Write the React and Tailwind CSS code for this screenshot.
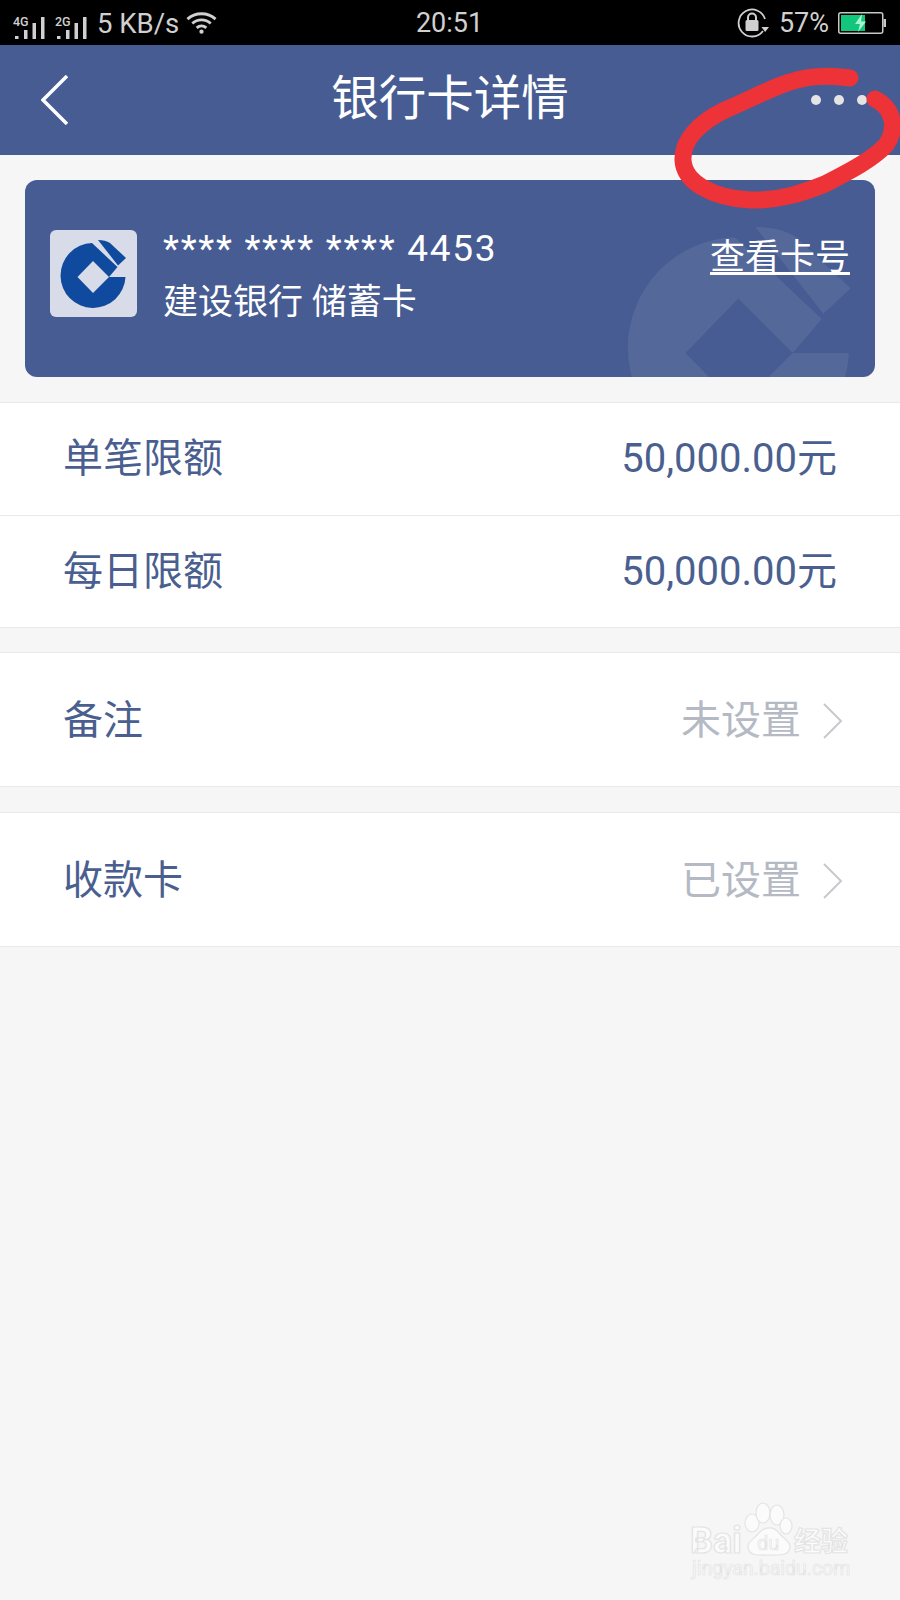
import React from 'react';

const cjk = 'font-["Roboto","Noto_Sans_CJK_SC",sans-serif]';

const SignalBars = ({ label }) => (
  <svg width="32" height="34" viewBox="0 0 32 34" className="block">
    <text x="0" y="20" fontSize="12.5" fontFamily="Roboto" fontWeight="500" fill="#d0d0d0">{label}</text>
    <rect x="2" y="30" width="3.5" height="3" fill="#d0d0d0" />
    <rect x="11" y="24" width="3.5" height="9" fill="#d0d0d0" />
    <rect x="19.5" y="17" width="3.5" height="16" fill="#d0d0d0" />
    <rect x="28" y="11" width="3.5" height="22" fill="#d0d0d0" />
  </svg>
);

const Wifi = () => (
  <svg width="31" height="24" viewBox="0 0 32 24" fill="none" stroke="#d0d0d0" strokeWidth="3">
    <path d="M1.5 8 C9.5 0.5 22.5 0.5 30.5 8" />
    <path d="M6.5 12.5 C12 7.5 20 7.5 25.5 12.5" />
    <path d="M11 17 C14 14.5 18 14.5 21 17" />
    <circle cx="16" cy="21" r="2.2" fill="#d0d0d0" stroke="none" />
  </svg>
);

const RotationLock = () => (
  <svg width="32" height="32" viewBox="0 0 32 32" fill="none">
    <path d="M26 24 A13.5 13.5 0 1 1 28 12" stroke="#d0d0d0" strokeWidth="1.8" />
    <path d="M24.5 20 L32 20 L28.2 25 Z" fill="#d0d0d0" />
    <rect x="8.5" y="13" width="13" height="11" rx="1.5" fill="#d0d0d0" />
    <path d="M11 13 V10.5 A4 4 0 0 1 19 10.5 V13" stroke="#d0d0d0" strokeWidth="2" />
  </svg>
);

const Battery = () => (
  <svg width="48" height="22" viewBox="0 0 48 22" fill="none">
    <rect x="0.75" y="0.75" width="44" height="20.5" rx="2" stroke="#c8c8c8" strokeWidth="1.5" />
    <rect x="3" y="3" width="24" height="16" fill="#12c77c" />
    <rect x="45.5" y="7" width="2.5" height="8" fill="#c8c8c8" />
    <path d="M24 2 L17 12 H22 L20 20 L28 9.5 H23 Z" fill="#a8f5d0" />
  </svg>
);

const CcbLogo = ({ className, color }) => (
  <svg viewBox="0 0 87 87" className={className} fill={color}>
    <path d="M75.5 47 H59 L43 63 L27.5 47 L43 31 L59 47 L67.5 37 L42 13 A32.5 32.5 0 1 0 75.5 47 Z" />
    <path d="M48 10 C53 10 57 11 60 13 L76 28 L68 35.5 Z" />
  </svg>
);

const Chevron = () => (
  <svg width="20" height="36" viewBox="0 0 20 36" fill="none" stroke="#c6c9ce" strokeWidth="2">
    <path d="M1 1 L18 18 L1 35" />
  </svg>
);

const Row = ({ label, value, valueClass, chevron, heightClass }) => (
  <div className={`flex items-center justify-between pl-[63px] ${chevron ? 'pr-[57px] pt-[3px]' : 'pr-[63px]'} ${heightClass}`}>
    <span className="text-[40px] text-[#4a5f8f]">{label}</span>
    <span className="flex items-center gap-[22px]">
      <span className={valueClass}>{value}</span>
      {chevron && <Chevron />}
    </span>
  </div>
);

export default function App() {
  return (
    <div className={`relative w-[900px] h-[1600px] overflow-hidden bg-[#f6f6f6] ${cjk}`}>
      {/* status bar */}
      <div className="flex items-center justify-between h-[45px] bg-black pl-[13px] pr-[14px] text-[#d0d0d0]">
        <div className="flex items-center w-[300px]">
          <SignalBars label="4G" />
          <span className="w-[10px]" />
          <SignalBars label="2G" />
          <span className="ml-[10px] pt-[2px] text-[27.5px] leading-none">5 KB/s</span>
          <span className="ml-[7px]"><Wifi /></span>
        </div>
        <span className="pt-[2px] text-[27px] leading-none">20:51</span>
        <div className="flex items-center justify-end w-[300px]">
          <RotationLock />
          <span className="ml-[10px] mr-[9px] pt-[2px] text-[27px] leading-none">57%</span>
          <Battery />
        </div>
      </div>

      {/* header */}
      <div className="flex items-center h-[110px] bg-[#465c92] pl-[41px] pr-[33px]">
        <div className="flex-1">
          <svg width="28" height="50" viewBox="0 0 28 50" fill="none" stroke="white" strokeWidth="3.5">
            <path d="M26 1 L2 25 L26 49" />
          </svg>
        </div>
        <span className="-ml-[8px] text-[47.5px] text-white">银行卡详情</span>
        <div className="flex flex-1 justify-end gap-[13px]">
          <span className="w-[10px] h-[10px] rounded-full bg-[#e4e4e4]" />
          <span className="w-[10px] h-[10px] rounded-full bg-[#e4e4e4]" />
          <span className="w-[10px] h-[10px] rounded-full bg-[#e4e4e4]" />
        </div>
      </div>

      {/* card */}
      <div className="px-[25px] pt-[25px] pb-[25px]">
        <div className="relative flex items-center h-[197px] rounded-[12px] bg-[#465c92] overflow-hidden pl-[25px] pr-[25px]">
          <div className="absolute left-[567px] top-[13px] w-[296px] h-[296px]">
            <CcbLogo className="w-full h-full" color="rgba(255,255,255,0.08)" />
          </div>
          <div className="relative -mt-[10px] flex items-center justify-center w-[87px] h-[87px] rounded-[6px] bg-[#d8dce8]">
            <CcbLogo className="w-[87px] h-[87px]" color="#0f4a9e" />
          </div>
          <div className="relative -mt-[6px] ml-[26px] text-white">
            <div className="text-[37px] leading-[50px] tracking-[1.7px]">**** **** **** 4453</div>
            <div className="text-[35px] leading-[50px] mt-[4px]">建设银行 储蓄卡</div>
          </div>
          <span className="relative ml-auto -mt-[41px] text-[35px] leading-[42px] text-white underline underline-offset-[3px]">查看卡号</span>
        </div>
      </div>

      {/* limits */}
      <div className="bg-white border-y border-[#e9e9e9]">
        <Row label="单笔限额" value="50,000.00元" valueClass="text-[40px] text-[#4a5f8f]" heightClass="h-[113px] border-b border-[#e9e9e9]" />
        <Row label="每日限额" value="50,000.00元" valueClass="text-[40px] text-[#4a5f8f]" heightClass="h-[111px]" />
      </div>

      <div className="mt-[24px] bg-white border-y border-[#e9e9e9]">
        <Row label="备注" value="未设置" valueClass="text-[40px] text-[#b4b9c4]" chevron heightClass="h-[133px]" />
      </div>

      <div className="mt-[25px] bg-white border-y border-[#e9e9e9]">
        <Row label="收款卡" value="已设置" valueClass="text-[40px] text-[#b4b9c4]" chevron heightClass="h-[133px]" />
      </div>

      {/* hand-drawn annotation */}
      <svg className="absolute left-0 top-0 pointer-events-none" width="900" height="260" fill="none">
        <path
          d="M850 78 C830 75 808 76 790 82 C770 88 745 102 725 110 C700 122 682 140 683 160 C684 182 712 198 750 200 C780 201 805 192 825 184 C848 172 872 160 886 145 C898 128 893 108 875 99"
          stroke="#ee3338"
          strokeWidth="17"
          strokeLinecap="round"
          strokeLinejoin="round"
        />
      </svg>

      {/* watermark */}
      <div className="absolute left-[688px] top-[1490px] w-[175px] h-[100px]">
        <svg width="175" height="100" viewBox="0 0 175 100" fill="#fbfbfb" stroke="#e4e4e4" strokeWidth="1.2">
          <text x="2" y="63" fontSize="36" fontWeight="700" fontFamily="Roboto">Bai</text>
          <ellipse cx="64" cy="33" rx="7" ry="9" />
          <ellipse cx="75" cy="23" rx="7" ry="10" />
          <ellipse cx="89" cy="25" rx="7" ry="10" />
          <ellipse cx="98" cy="36" rx="6" ry="8" />
          <path d="M70 44 C76 36 86 36 91 43 C96 49 103 52 102 58 C100 66 92 65 82 65 C72 65 62 67 60 58 C59 52 65 50 70 44 Z" />
          <text x="69" y="60" fontSize="20" strokeWidth="0.7" fontFamily="Roboto">du</text>
          <text x="106" y="61" fontSize="27" fontWeight="700" fontFamily="Noto Sans CJK SC">经验</text>
          <text x="4" y="85" fontSize="19.5" strokeWidth="0.7" fontFamily="Roboto">jingyan.baidu.com</text>
        </svg>
      </div>
    </div>
  );
}
